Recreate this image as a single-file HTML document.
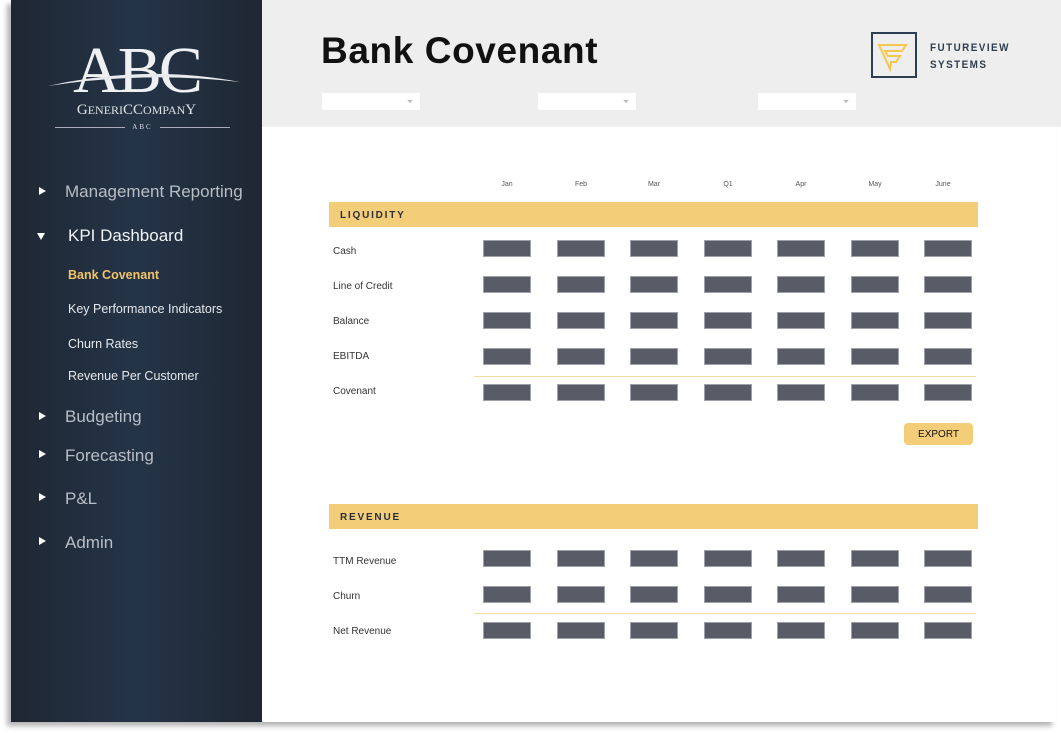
<!DOCTYPE html>
<html><head><meta charset="utf-8"><style>
*{margin:0;padding:0;box-sizing:border-box}
body{width:1061px;height:733px;background:#fff;position:relative;overflow:hidden;font-family:"Liberation Sans",sans-serif}
.a{position:absolute}
#frame{left:11px;top:0;width:1045px;height:722px;background:#fff;box-shadow:-4px 4px 5px rgba(0,0,0,.3)}
#side{left:11px;top:0;width:251px;height:722px;background:linear-gradient(90deg,#1f2733 0%,#243447 50%,#1f2733 100%)}
#head{left:262px;top:0;width:799px;height:127px;background:#eeeeee}
.nav{color:#b9bec6;font-size:17px;left:65px}
.tri{left:39px;width:0;height:0;border-top:4.5px solid transparent;border-bottom:4.5px solid transparent;border-left:7px solid #fff}
.sub{color:#e6e8ec;font-size:12.5px;left:68px}
.dd{width:98px;height:17px;background:#fff}
.dd:after{content:"";position:absolute;right:7px;top:7px;border-left:3px solid transparent;border-right:3px solid transparent;border-top:3px solid #bbb}
.m{font-size:7px;color:#555;width:60px;text-align:center;top:181px}
.bar{left:329px;width:649px;height:25px;background:#f3cd78;font-size:10px;font-weight:bold;letter-spacing:1.8px;color:#2a2f3a;padding:7px 0 0 11px}
.lbl{left:333px;font-size:10px;color:#333}
.b{width:48px;height:17px;background:#595b67;box-shadow:0 0 0 1px #9ea0aa inset}
.ln{left:474px;width:502px;height:1px;background:#f6dd9c}
</style></head><body>
<div id="frame" class="a"></div>
<div id="side" class="a"></div>
<div id="head" class="a"></div>

<!-- logo -->
<div class="a" style="left:11px;top:36px;width:251px;text-align:center;font-family:'Liberation Serif',serif;font-size:66px;color:#eef0f2;line-height:70px;letter-spacing:-3px">ABC</div>
<svg class="a" style="left:45px;top:62px" width="200" height="30"><path d="M3 24 Q100 2 195 20 Q100 9 3 24Z" fill="#e8eaec"/></svg>
<div class="a" style="left:11px;top:102px;width:251px;text-align:center;font-family:'Liberation Serif',serif;font-size:15px;color:#dfe2e6;letter-spacing:0px">G<span style="font-size:12px">ENERI</span>CC<span style="font-size:12px">OMPAN</span>Y</div>
<div class="a" style="left:55px;top:127px;width:70px;height:1px;background:#aab"></div>
<div class="a" style="left:160px;top:127px;width:70px;height:1px;background:#aab"></div>
<div class="a" style="left:125px;top:123px;width:35px;text-align:center;font-family:'Liberation Serif',serif;font-size:7px;color:#dde;letter-spacing:2px">ABC</div>

<!-- nav -->
<div class="a tri" style="top:187px"></div><div class="a nav" style="top:182px">Management Reporting</div>
<div class="a" style="left:37px;top:233px;border-left:4.5px solid transparent;border-right:4.5px solid transparent;border-top:7px solid #fff"></div>
<div class="a nav" style="left:68px;top:226px;color:#f0f2f4">KPI Dashboard</div>
<div class="a sub" style="top:268px;color:#f0c46a;font-weight:bold">Bank Covenant</div>
<div class="a sub" style="top:302px">Key Performance Indicators</div>
<div class="a sub" style="top:337px">Churn Rates</div>
<div class="a sub" style="top:369px">Revenue Per Customer</div>
<div class="a tri" style="top:412px"></div><div class="a nav" style="top:407px">Budgeting</div>
<div class="a tri" style="top:450px"></div><div class="a nav" style="top:446px">Forecasting</div>
<div class="a tri" style="top:493px"></div><div class="a nav" style="top:489px">P&amp;L</div>
<div class="a tri" style="top:537px"></div><div class="a nav" style="top:533px">Admin</div>

<!-- header -->
<div class="a" style="left:321px;top:30px;font-size:37px;font-weight:bold;color:#111;letter-spacing:0.6px">Bank Covenant</div>
<div class="a dd" style="left:322px;top:93px"></div>
<div class="a dd" style="left:538px;top:93px"></div>
<div class="a dd" style="left:758px;top:93px"></div>
<svg class="a" style="left:871px;top:32px" width="47" height="47"><rect x="1" y="1" width="44" height="44" fill="none" stroke="#2e3e52" stroke-width="2"/><path d="M8 13 L35 13 L31 19 L14 19 L17 24 L29 24 L25 30 L20 30 L19 37 Z" fill="none" stroke="#f4c84e" stroke-width="2"/></svg>
<div class="a" style="left:930px;top:40px;font-size:11px;font-weight:bold;color:#2e3e52;letter-spacing:1.6px;line-height:17px;transform:scaleX(0.9);transform-origin:left">FUTUREVIEW<br>SYSTEMS</div>

<!-- months -->
<div class="a m" style="left:477px">Jan</div>
<div class="a m" style="left:551px">Feb</div>
<div class="a m" style="left:624px">Mar</div>
<div class="a m" style="left:698px">Q1</div>
<div class="a m" style="left:771px">Apr</div>
<div class="a m" style="left:845px">May</div>
<div class="a m" style="left:913px">June</div>

<div class="a bar" style="top:202px;padding-top:8px">LIQUIDITY</div>
<div class="a bar" style="top:504px;padding-top:8px">REVENUE</div>

<div class="a lbl" style="top:246px">Cash</div>
<div class="a lbl" style="top:281px">Line of Credit</div>
<div class="a lbl" style="top:316px">Balance</div>
<div class="a lbl" style="top:351px">EBITDA</div>
<div class="a lbl" style="top:386px">Covenant</div>
<div class="a lbl" style="top:556px">TTM Revenue</div>
<div class="a lbl" style="top:591px">Churn</div>
<div class="a lbl" style="top:626px">Net Revenue</div>

<div class="a ln" style="top:376px"></div>
<div class="a ln" style="top:613px"></div>

<div class="a" style="left:904px;top:423px;width:69px;height:22px;background:#f3cd78;border-radius:4px;font-size:10px;color:#111;text-align:center;line-height:23px">EXPORT</div>

<div id="boxes"></div>
<script>
var xs=[483,557,630,704,777,851,924],ys=[240,276,312,348,384,550,586,622],h="";
ys.forEach(function(y){xs.forEach(function(x){h+='<div class="a b" style="left:'+x+'px;top:'+y+'px"></div>';});});
document.getElementById("boxes").innerHTML=h;
</script>
</body></html>
